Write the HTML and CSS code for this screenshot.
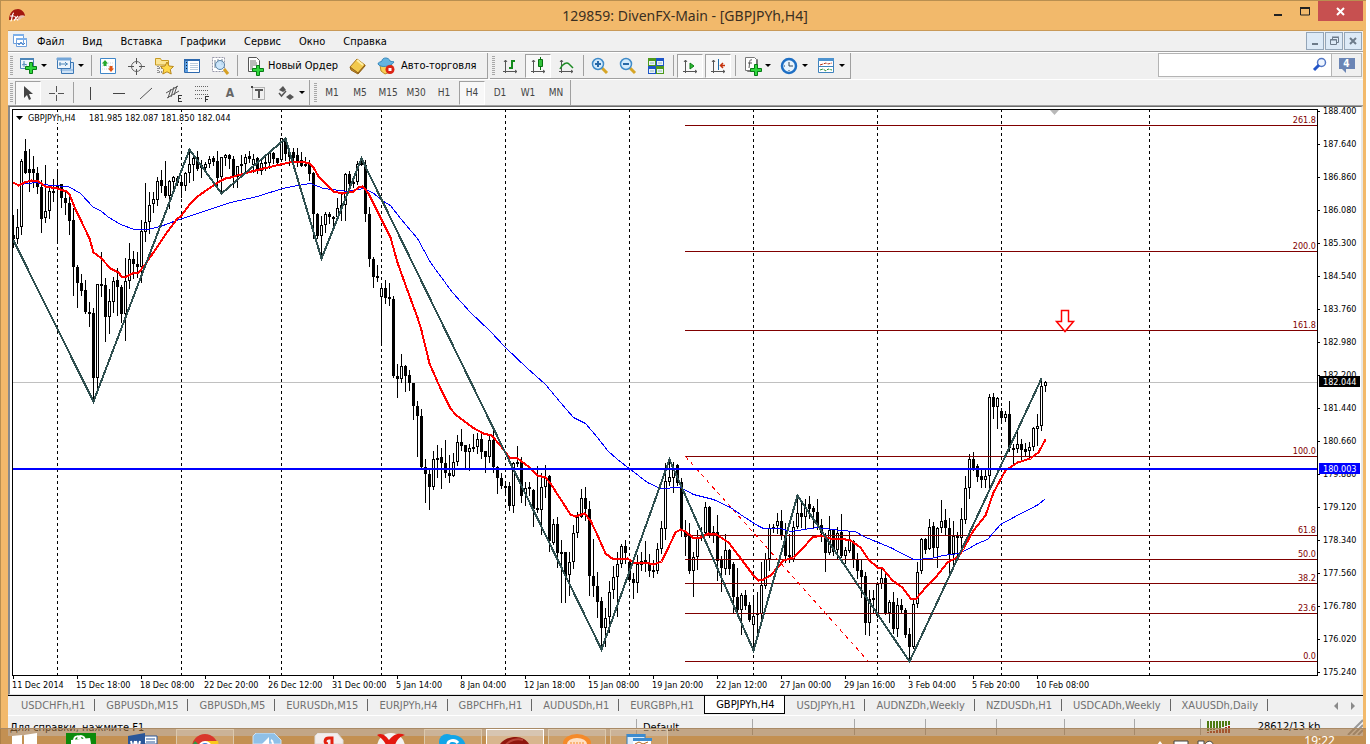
FILE: index.html
```
<!DOCTYPE html>
<html lang="ru">
<head>
    <meta charset="UTF-8">
    <meta name="viewport" content="width=device-width, initial-scale=1.0">
    <title>129859: DivenFX-Main - [GBPJPYh,H4]</title>
    <link rel="stylesheet" href="styles.css">
</head>
<body>
    <div class="window">
        <header class="titlebar">
            <svg class="logo" width="18" height="16" viewBox="0 0 18 16"><path d="M1 12C1 4 6 1 10 1c4 0 7 4 7 7-3-1-5 0-7 3z" fill="#a3180f"/><path d="M9 12c1-4 4-6 8-4-1 2-4 1-5 4z" fill="#e8c0b0"/><path d="M2.500 13c2 0 1-8 3.500-8M2 8h4M6.500 8l3.500 4.500M10 8l-4 4.500" stroke="#fff" stroke-width="1.2" fill="none"/></svg>
            <h1 class="caption">129859: DivenFX-Main - [GBPJPYh,H4]</h1>
            <div class="winbtns">
                <button class="wb" aria-label="Свернуть"><svg width="26" height="20"><path d="M10 13h8v2h-8z" fill="#222"/></svg></button>
                <button class="wb" aria-label="Развернуть"><svg width="26" height="20"><path d="M9.500 7h9v7h-9z" fill="none" stroke="#222"/><path d="M9 6h10v2H9z" fill="#222"/></svg></button>
                <button class="wb close" aria-label="Закрыть"><svg width="45" height="20"><path d="M19 7l7 7M26 7l-7 7" stroke="#fff" stroke-width="2"/></svg></button>
            </div>
        </header>
        <div class="client">
            <nav class="menubar">
                <svg class="mdi" width="16" height="16" viewBox="0 0 16 16"><path d="M1.500 1.500h10v9h-10zM4.500 5.500h10v8h-10z" fill="#fff" stroke="#6fa0dc"/><path d="M1 1h11v2H1zM4 5h11v2H4z" fill="#7db0ea"/><path d="M6 10l1 2 2-3 2 3 2-2" fill="none" stroke="#4a84cc"/></svg>
                <button>Файл</button><button>Вид</button><button>Вставка</button><button>Графики</button><button>Сервис</button><button>Окно</button><button>Справка</button>
                <div class="mdibtns">
                    <button aria-label="Свернуть окно"><svg width="16" height="16"><path d="M5 10h6v2H5z" fill="#6d7b8a"/></svg></button>
                    <button aria-label="Восстановить окно"><svg width="16" height="16"><path d="M6.500 6V4.500h6v5H11M4.500 6.500h6v5h-6zM4 7h7M6 4h7" fill="none" stroke="#6d7b8a"/></svg></button>
                    <button aria-label="Закрыть окно"><svg width="16" height="16"><path d="M5 5l6 6M11 5l-6 6" stroke="#6d7b8a" stroke-width="2"/></svg></button>
                </div>
            </nav>
            <div class="toolrow">
                <div class="toolbar">
                    <i class="grip"></i>
                    <button class="drop" aria-label="Новый график"><svg width="20" height="20" viewBox="0 0 20 20"><path d="M1.500 2.500h13v10h-13z" fill="#eef5fc" stroke="#4d86b8"/><path d="M1 2h14v2H1z" fill="#4d86b8"/><path d="M5 5v6M3 9l2-1 3 1" stroke="#4d86b8" fill="none"/><path d="M10.500 6.500h3v4h4v3h-4v4h-3v-4h-4v-3h4z" fill="#2fd63c" stroke="#087a16"/></svg></button>
                    <button class="drop" aria-label="Профили"><svg width="20" height="20" viewBox="0 0 20 20"><path d="M5.500 6.500h12v11h-12z" fill="#cfe3f7" stroke="#3d78b4"/><path d="M1.500 2.500h13v10h-13z" fill="#eef5fc" stroke="#3d78b4"/><path d="M1 2h14v2H1zM4 14h13" fill="#74a6d8" stroke="#74a6d8"/><path d="M4 6v4M3 8h9M9 6l2 2-2 2" stroke="#4d86b8" fill="none"/></svg></button>
                    <i class="sep"></i>
                    <button aria-label="Обзор рынка"><svg width="18" height="18" viewBox="0 0 18 18"><path d="M1.500 1.500h15v15h-15z" fill="#fff" stroke="#3f86c8"/><path d="M3 6h12M3 9h12M3 12h12" stroke="#cfd8e2" stroke-dasharray="1 1"/><path d="M6 3l3 3.500H7.500V9h-3V6.500H3z" fill="#27a92d"/><path d="M12 15l3-3.500h-1.500V9h-3v2.500H9z" fill="#e05618"/></svg></button>
                    <button aria-label="Окно данных"><svg width="18" height="18" viewBox="0 0 18 18"><circle cx="9.500" cy="9.500" r="5" fill="none" stroke="#666"/><path d="M9.500 1v6M9.500 12v6M1 9.500h6M12 9.500h6" stroke="#555"/></svg></button>
                    <button aria-label="Навигатор"><svg width="20" height="20" viewBox="0 0 20 20"><path d="M1.500 9V2.500h5l1 2h7V9z" fill="#fbe596" stroke="#c79a22"/><path d="M4 10v8M5 12h3M5 16h3" stroke="#333" stroke-dasharray="1 1"/><path d="M13 6l2 4 4.500.500-3.200 3 .900 4.500-4.200-2.200L8.800 18l.900-4.500-3.200-3 4.500-.500z" fill="#ffd84a" stroke="#b8871b"/></svg></button>
                    <button aria-label="Терминал"><svg width="18" height="18" viewBox="0 0 18 18"><path d="M1.500 2.500h15v13h-15z" fill="#fff" stroke="#2d68ad"/><path d="M1 2h16v2H1z" fill="#2d68ad"/><path d="M2 4h3v11H2z" fill="#5f9fe0"/><path d="M3.500 5v9" stroke="#123" stroke-dasharray="1 2"/><path d="M7 6.500h8M7 8.500h8M7 10.500h8M7 12.500h8" stroke="#bcd"/></svg></button>
                    <button aria-label="Тестер стратегий"><svg width="20" height="20" viewBox="0 0 20 20"><path d="M2.500 1.500h12v14h-12z" fill="#fff" stroke="#99a" stroke-dasharray="2 1"/><path d="M5 4v8M8 3v4M12 3v6" stroke="#789"/><circle cx="10" cy="9" r="4.500" fill="#bfe0fa" fill-opacity=".8" stroke="#5b83a5"/><path d="M14 13l4 5" stroke="#d6a024" stroke-width="3"/></svg></button>
                    <i class="sep"></i>
                    <button class="text"><svg width="20" height="20" viewBox="0 0 20 20"><path d="M3.500 1.500h8l3 3v11h-11z" fill="#fff" stroke="#555"/><path d="M5 5h6M5 7h7M5 9h7M5 11h3M5 13h3" stroke="#777"/><path d="M11.500 9.500h3v3h4v3h-4v4h-3v-4h-4v-3h4z" fill="#2fd63c" stroke="#087a16"/></svg>Новый Ордер</button>
                    <button aria-label="MetaEditor"><svg width="20" height="20" viewBox="0 0 20 20"><path d="M3 11l7-8 8 6-7 8z" fill="#f2c94c" stroke="#a9761b"/><path d="M3 11l1 3 7 4 7-8v-1l-7 8z" fill="#c98f24" stroke="#94651a"/><path d="M10 4l6 5" stroke="#fff0a8" stroke-width="2"/></svg></button>
                    <button class="text auto"><svg width="20" height="20" viewBox="0 0 20 20"><path d="M4 9h12l-2 7-5 2-4-3z" fill="#f7cf55" stroke="#bb8a22"/><path d="M2 8c0-2 3-2 4-3 0-4 7-4 8 0 1 1 4 0 4 1-3 5-14 6-16 2z" fill="#64b3e0" stroke="#3687bc"/><circle cx="14" cy="13.500" r="4.500" fill="#dc2415"/><path d="M12.500 12h3v3h-3z" fill="#fff"/></svg>Авто-торговля</button>
                </div>
                <div class="toolbar">
                    <i class="grip"></i>
                    <button aria-label="Бары"><svg width="18" height="18" viewBox="0 0 18 18"><path class="ax" d="M4.500 3v13M2 14.500h14M3 5l1.500-2L6 5M14 13l2 1.500-2 1.500"/><path d="M11 3v9M8 11h3M11 4h3" stroke="#138a1b" stroke-width="2"/></svg></button>
                    <button class="on" aria-label="Свечи"><svg width="18" height="18" viewBox="0 0 18 18"><path class="ax" d="M4.500 3v13M2 14.500h14M3 5l1.500-2L6 5M14 13l2 1.500-2 1.500"/><path d="M11.500 0v13" stroke="#087010"/><path d="M9.500 2.500h4v7h-4z" fill="#32c23a" stroke="#087010"/></svg></button>
                    <button aria-label="Линия"><svg width="18" height="18" viewBox="0 0 18 18"><path class="ax" d="M4.500 3v13M2 14.500h14M3 5l1.500-2L6 5M14 13l2 1.500-2 1.500"/><path d="M3 12c3-6 7-7 9-5l4 4" fill="none" stroke="#1d8b25" stroke-width="1.500"/></svg></button>
                    <i class="sep"></i>
                    <button aria-label="Увеличить"><svg width="20" height="20" viewBox="0 0 20 20"><path d="M12 12l5 5" stroke="#d6a526" stroke-width="3"/><circle cx="8" cy="8" r="5.500" fill="#d4ebfc" stroke="#3f8bc9" stroke-width="1.500"/><path d="M5 8h6M8 5v6" stroke="#2869a8" stroke-width="2"/></svg></button>
                    <button aria-label="Уменьшить"><svg width="20" height="20" viewBox="0 0 20 20"><path d="M12 12l5 5" stroke="#d6a526" stroke-width="3"/><circle cx="8" cy="8" r="5.500" fill="#d4ebfc" stroke="#3f8bc9" stroke-width="1.500"/><path d="M5 8h6" stroke="#2869a8" stroke-width="2"/></svg></button>
                    <button aria-label="Мозаика"><svg width="18" height="18" viewBox="0 0 18 18"><path d="M1 1h8v8H1zM9 9h8v8H9z" fill="#4d9a1b"/><path d="M9 1h8v8H9zM1 9h8v8H1z" fill="#1d55c8"/><path d="M2 4h6v4H2zM10 4h6v4h-6zM2 12h6v4H2zM10 12h6v4h-6z" fill="#eaf3f7"/><path d="M3 6h4M11 6h4M3 14h4M11 14h4" stroke="#9bb"/></svg></button>
                    <i class="sep"></i>
                    <button class="on" aria-label="Автопрокрутка"><svg width="18" height="18" viewBox="0 0 18 18"><path class="ax" d="M4.500 3v13M2 14.500h14M3 5l1.500-2L6 5M14 13l2 1.500-2 1.500"/><path d="M9 6l4 3-4 3z" fill="#2bbd34" stroke="#0c7d15"/></svg></button>
                    <button class="on" aria-label="Сдвиг графика"><svg width="18" height="18" viewBox="0 0 18 18"><path class="ax" d="M4.500 3v13M2 14.500h14M3 5l1.500-2L6 5M14 13l2 1.500-2 1.500"/><path d="M9.500 2v11" stroke="#1c6aa8"/><path d="M16 8.500h-5M14 6l-2.500 2.500L14 11" fill="none" stroke="#c6330d" stroke-width="1.500"/></svg></button>
                    <i class="sep"></i>
                    <button class="drop" aria-label="Индикаторы"><svg width="20" height="20" viewBox="0 0 20 20"><path d="M4.500 3.500h10v12h-10z" fill="#fff" stroke="#777"/><path d="M2.500 1.500h9l2 2v11h-11z" fill="#fff" stroke="#777"/><path d="M9 4c-3-1-2 2-3 8M5 7h4" fill="none" stroke="#555"/><path d="M11.500 8.500h3v4h4v3h-4v4h-3v-4h-4v-3h4z" fill="#2fd63c" stroke="#087a16"/></svg></button>
                    <button class="drop" aria-label="Периоды"><svg width="18" height="18" viewBox="0 0 18 18"><circle cx="9" cy="9" r="7" fill="#e9f5ff" stroke="#1e6fc4" stroke-width="2.500"/><path d="M9 5v4h4M9 13v1M4 9h1" fill="none" stroke="#345"/></svg></button>
                    <button class="drop" aria-label="Шаблоны"><svg width="18" height="18" viewBox="0 0 18 18"><path d="M1.500 1.500h15v14h-15z" fill="#fff" stroke="#3f83bd"/><path d="M1 1h16v3H1z" fill="#4d93cf"/><path d="M2 9.500h14" stroke="#3f83bd"/><path d="M3 8l3-1 3-1 2 1 4-1" fill="none" stroke="#b43218" stroke-dasharray="3 1"/><path d="M3 13l3-1 3 2 2-2 4 1" fill="none" stroke="#278e35" stroke-dasharray="3 1"/></svg></button>
                </div>
                <form class="search">
                    <input type="text" aria-label="Поиск">
                    <button type="button" class="find" aria-label="Найти"><svg width="16" height="16" viewBox="0 0 16 16"><circle cx="9.500" cy="5.500" r="4" fill="#eef5ff" stroke="#5276c4" stroke-width="1.500"/><path d="M7 8l-5 5" stroke="#2455c8" stroke-width="3"/></svg></button>
                    <button type="button" class="news" aria-label="Сообщения"><svg width="18" height="18" viewBox="0 0 18 18"><path d="M1 2h16v11H8v4l-4-4H1z" fill="#6b85b5"/></svg><b>4</b></button>
                </form>
            </div>
            <div class="toolrow second">
                <div class="toolbar">
                    <i class="grip"></i>
                    <button class="on" aria-label="Курсор"><svg width="18" height="18" viewBox="0 0 18 18"><path d="M5 2v12l3-3 2 5 2-1-2-5h4z" fill="#444"/></svg></button>
                    <button aria-label="Перекрестие"><svg width="18" height="18" viewBox="0 0 18 18"><path d="M9.500 2v6M9.500 11v6M2 9.500h6M11 9.500h6" stroke="#555"/></svg></button>
                    <i class="sep"></i>
                    <button aria-label="Вертикальная линия"><svg width="18" height="18" viewBox="0 0 18 18"><path d="M9.500 3v13" stroke="#444"/></svg></button>
                    <button aria-label="Горизонтальная линия"><svg width="18" height="18" viewBox="0 0 18 18"><path d="M4 9.500h12" stroke="#444"/></svg></button>
                    <button aria-label="Трендовая линия"><svg width="18" height="18" viewBox="0 0 18 18"><path d="M3 15L15 4" stroke="#555"/></svg></button>
                    <button aria-label="Канал"><svg width="18" height="18" viewBox="0 0 18 18"><path d="M1 9l12-7M2 14l12-7M3 14l3-9M6 13l3-10M9 11l3-9" stroke="#555"/><path d="M13 17.500h4M13 14.500h3M13 11.500h4M13.500 11v7" stroke="#333"/></svg></button>
                    <button aria-label="Фибоначчи"><svg width="18" height="18" viewBox="0 0 18 18"><path d="M2 2.500h14M2 6.500h14M2 10.500h14M2 14.500h8" stroke="#666" stroke-dasharray="1 1"/><path d="M12 12.500h4M12 15.500h3M12.500 12v6" stroke="#333"/></svg></button>
                    <button class="letter">A</button>
                    <button aria-label="Текстовая метка"><svg width="18" height="18" viewBox="0 0 18 18"><path d="M3.500 3.500h12v12h-12z" fill="none" stroke="#777" stroke-dasharray="1 1"/><path d="M6 6h8M10 6v8" stroke="#555" stroke-width="2"/><path d="M2 2h2v2H2z" fill="#444"/></svg></button>
                    <button class="drop wide" aria-label="Стрелки"><svg width="18" height="18" viewBox="0 0 18 18"><path d="M2 6l4-4 3 4-3 2zM9 13l4-3 4 3-4 3z" fill="#555"/><path d="M2 9l2.500 3L9 7" fill="none" stroke="#555" stroke-width="1.500"/></svg></button>
                </div>
                <div class="toolbar periods">
                    <i class="grip"></i>
                    <button>M1</button><button>M5</button><button>M15</button><button>M30</button><button>H1</button><button class="on">H4</button><button>D1</button><button>W1</button><button>MN</button>
                </div>
            </div>
            <main class="chart">
                <svg id="chart" viewBox="10 107 1350 587" preserveAspectRatio="xMinYMin meet" role="img" aria-label="GBPJPYh,H4"></svg>
            </main>
            <nav class="tabs">
                <a href="#">USDCHFh,H1</a><a href="#">GBPUSDh,M15</a><a href="#">GBPUSDh,M5</a><a href="#">EURUSDh,M15</a><a href="#">EURJPYh,H4</a><a href="#">GBPCHFh,H1</a><a href="#">AUDUSDh,H1</a><a href="#" class="last">EURGBPh,H1</a><a href="#" class="active">GBPJPYh,H4</a><a href="#">USDJPYh,H1</a><a href="#">AUDNZDh,Weekly</a><a href="#">NZDUSDh,H1</a><a href="#">USDCADh,Weekly</a><a href="#">XAUUSDh,Daily</a>
                <span class="scroll">
                    <button aria-label="Назад"><svg width="8" height="8"><path d="M6 0v8L2 4z" fill="#8a8a8a"/></svg></button>
                    <button aria-label="Вперёд"><svg width="8" height="8"><path d="M2 0v8l4-4z" fill="#8a8a8a"/></svg></button>
                </span>
            </nav>
            <footer class="status">
                <span class="help">Для справки, нажмите F1</span>
                <span class="cell w116">Default</span><span class="cell w102"></span><span class="cell w71"></span><span class="cell w71"></span><span class="cell w68"></span><span class="cell w70"></span><span class="cell w66"></span>
                <span class="cell net">
                    <svg width="24" height="12"><path d="M0 0h2v10H0zM3 0h2v9H3zM6 0h2v9H6zM9 0h2v8H9zM12 0h2v7h-2zM15 0h2v6h-2zM18 0h2v5h-2zM21 0h2v4h-2z" fill="#4f7a12"/><path d="M0 11h2v1H0zM3 10h2v2H3zM6 10h2v2H6zM9 9h2v3H9zM12 8h2v4h-2zM15 7h2v5h-2zM18 6h2v6h-2zM21 5h2v7h-2z" fill="#a52a14"/></svg>
                    <span>28612/13 kb</span>
                    <svg class="size" width="16" height="16"><path d="M1 16L16 1M6 16L16 6M11 16l5-5" stroke="#999" stroke-width="2"/></svg>
                </span>
            </footer>
        </div>
    </div>
    <div class="taskbar">
        <button class="task" aria-label="Пуск"><svg width="30" height="11"><path d="M2 3l10-1v9H2zM14 2l13-2v11H14z" fill="#fff"/></svg></button>
        <button class="task" aria-label="Магазин"><svg width="30" height="11"><path d="M0 0h30v11H0z" fill="#0c8a0c"/><path d="M5 7l19-2 1 6H5z" fill="#fff"/><path d="M8 8c0-6 6-6 7-1M12 6c1-4 6-4 7 1" fill="none" stroke="#fff" stroke-width="2"/></svg></button>
        <button class="task" aria-label="Word"><svg width="30" height="11"><path d="M16 3h13v8H16z" fill="#fff" stroke="#2a5699"/><path d="M18 6h9M18 9h9" stroke="#2a5699"/><path d="M0 3l17-3v11H0z" fill="#2a5699"/><path d="M3 8l1 4M7 8l-1 4M8 8l1 4M12 8l-1 4" stroke="#fff" stroke-width="2"/></svg></button>
        <button class="task run" aria-label="Chrome"><svg width="30" height="11"><circle cx="15" cy="13" r="13" fill="#d9362c"/><path d="M15 7h13c1 4 0 5 0 6H15z" fill="#fbc91c"/><path d="M2 11l3-4 6 6H2z" fill="#2b9a45"/><circle cx="15" cy="14" r="7" fill="#fff"/><circle cx="15" cy="14" r="5" fill="#3b7de0"/></svg></button>
        <button class="task" aria-label="Звук"><svg width="30" height="11"><path d="M1 3l3-3h18l7 7v4H1z" fill="#8fc0e8" stroke="#cfe3f4"/><path d="M10 11l7-7v7z" fill="#fff"/><path d="M19 7c2 1 2 3 2 5" stroke="#fff" stroke-width="2" fill="none"/></svg></button>
        <button class="task" aria-label="Яндекс"><svg width="30" height="11"><path d="M1 3l3-3h19l6 7v4H1z" fill="#f3eeee" stroke="#ddd"/><path d="M18 12V5h-3c-5 0-5 6-1 6" fill="none" stroke="#e3200f" stroke-width="3"/></svg></button>
        <button class="task" aria-label="Яндекс.Браузер"><svg width="30" height="11"><circle cx="15" cy="14" r="14" fill="#f4f4f4"/><path d="M1 2c5-3 9 1 12 5 4-5 9-8 16-5-6 2-8 5-10 10h-9C8 7 5 5 1 2z" fill="#e4180f"/></svg></button>
        <button class="task run" aria-label="Skype"><svg width="30" height="11"><circle cx="9" cy="8" r="8" fill="#12a5e8"/><circle cx="15" cy="14" r="13" fill="#12a5e8"/><path d="M20 9c-3-4-11-3-10 2" fill="none" stroke="#fff" stroke-width="3"/></svg></button>
        <button class="task run cur" aria-label="DivenFX"><svg width="34" height="9"><path d="M1 9C4 2 12 0 18 0c7 0 12 4 14 9z" fill="#8f160d"/><path d="M7 9c4-6 12-8 18-6" fill="none" stroke="#b94538" stroke-width="2"/></svg></button>
        <button class="task run" aria-label="Сообщения"><svg width="30" height="11"><ellipse cx="15" cy="9" rx="14" ry="9" fill="#f58a2a"/><ellipse cx="15" cy="10" rx="10" ry="6" fill="#ffe0c4"/><path d="M8 9h14" stroke="#f58a2a" stroke-dasharray="2 1"/></svg></button>
        <button class="task run" aria-label="Графики"><svg width="30" height="11"><path d="M3 0h18v11H3z" fill="#dcecf9" stroke="#2e78b8"/><path d="M3 0h18v3H3zM9 4h19v3H9z" fill="#3b8bd0"/><path d="M9 7h18v4H9z" fill="#fff"/><path d="M11 10l4-2 4 2 5-2" stroke="#b5651d" fill="none"/></svg></button>
        <div class="tray">
            <svg width="80" height="6"><path d="M1 5l3-4 3 4z" fill="#fff"/><path d="M18 1h14v6H18z" fill="#fff" stroke="#444"/><path d="M42 1h6v6h-6zM49 5c1-5 8-5 8 0v2h-8z" fill="#fff" stroke="#444"/><path d="M75 4h4v2h-4z" fill="#444"/></svg>
            <time class="clock">19:22</time>
        </div>
    </div>
    <script src="chart.js"></script>
</body>
</html>
```
FILE: styles.css
```
*{
    box-sizing: border-box;
    margin: 0;
    padding: 0;
}
html,
body{
    height: 100%;
    overflow: hidden;
    background: #fff;
}
body,
button,
input{
    font-family: "DejaVu Sans Condensed", "Open Sans", sans-serif;
    font-size: 11px;
    color: #000;
}
button{
    border: 0;
    background: none;
}
svg{
    display: block;
}
.window{
    display: flex;
    flex-direction: column;
    height: 100vh;
    margin-right: 4px;
    padding: 0 3px 8px 7px;
    background: #f2b96b;
    border-top: 1px solid #b98f50;
    border-left: 1px solid #b98f50;
}
.titlebar{
    display: flex;
    align-items: flex-start;
    height: 29px;
}
.logo{
    margin-top: 7px;
}
.caption{
    flex: 1;
    padding-left: 80px;
    font: 14px/29px "Noto Sans", sans-serif;
    color: #3a2f22;
    text-align: center;
}
.winbtns{
    display: flex;
}
.wb{
    width: 27px;
    height: 20px;
}
.close{
    width: 45px;
    background: #c75050;
}
.client{
    flex: 1;
    display: flex;
    flex-direction: column;
    min-height: 0;
    background: #f0f0f0;
    border-top: 1px solid #c99a58;
}
.menubar{
    display: flex;
    align-items: center;
    height: 21px;
    padding-left: 4px;
    border-bottom: 1px solid #a0a0a0;
}
.menubar > button{
    padding: 0 9px;
    height: 20px;
}
.mdibtns{
    display: flex;
    gap: 1px;
    margin-left: auto;
    padding-right: 1px;
}
.mdibtns button{
    width: 18px;
    height: 18px;
    border: 1px solid #93a5b8;
    background: #ddeaf7;
}
.toolrow{
    display: flex;
    height: 27px;
    border-top: 1px solid #fff;
}
.second{
    border-bottom: 1px solid #a0a0a0;
}
.toolbar{
    display: flex;
    align-items: center;
    padding: 0 6px 0 2px;
    border-right: 1px solid #a0a0a0;
    border-bottom: 1px solid #a0a0a0;
    margin-right: 2px;
}
.toolbar + .toolbar{
    padding-right: 1px;
}
.second .toolbar{
    padding-right: 0;
    border-bottom: 0;
}
.grip{
    width: 3px;
    height: 19px;
    margin-right: 1px;
    background: repeating-linear-gradient(#a8a8a8 0 1px, #f0f0f0 1px 2px);
}
.toolbar button{
    display: flex;
    align-items: center;
    justify-content: center;
    width: 28px;
    height: 24px;
    border: 1px solid transparent;
}
.toolbar .on{
    background: #f8f8f8;
    border-color: #a0a0a0 #fff #fff #a0a0a0;
    margin: 0 1px;
    width: 26px;
}
.toolbar .drop{
    width: 37px;
    justify-content: flex-start;
    padding-left: 4px;
}
.drop::after{
    content: "";
    margin-left: auto;
    margin-right: 3px;
    border: 3px solid transparent;
    border-top-color: #000;
    border-bottom: 0;
}
.toolbar .text{
    width: auto;
    padding: 0 4px;
    gap: 3px;
}
.toolbar .auto{
    gap: 5px;
}
.sep{
    width: 1px;
    height: 21px;
    margin: 0 2px 0 3px;
    background: #a0a0a0;
}
.ax{
    fill: none;
    stroke: #555;
}
.toolbar .letter{
    font-weight: bold;
    font-size: 12px;
    color: #666;
}
.periods button{
    font-size: 10px;
    color: #444;
}
.search{
    display: flex;
    height: 24px;
    margin-left: auto;
    margin-right: 1px;
    border: 1px solid #b4b4b4;
}
.search input{
    width: 150px;
    border: 0;
    outline: 0;
    background: #fff;
}
.find{
    width: 22px;
    padding-left: 3px;
    background: #fff;
}
.news{
    display: grid;
    place-items: center;
    width: 30px;
    border-left: 1px solid #b4b4b4;
}
.news svg,
.news b{
    grid-area: 1 / 1;
}
.news b{
    padding-bottom: 3px;
    font-size: 10px;
    color: #fff;
}
.chart{
    flex: 1;
    min-height: 0;
    padding: 0 1px 0 0;
    background: #fff;
    border-top: 1px solid #696969;
    border-left: 2px solid #8a8a8a;
    border-right: 2px solid #e8e8e8;
    border-bottom: 1px solid #e3e3e3;
}
#chart{
    width: 100%;
    height: 100%;
}
#chart text{
    font-family: "DejaVu Sans Condensed", sans-serif;
    font-size: 9px;
}
.tabs{
    display: flex;
    height: 21px;
    padding-left: 2px;
    border-top: 1px solid #000;
    border-bottom: 1px solid #fff;
}
.tabs a{
    display: flex;
    align-items: center;
    height: 18px;
    padding: 0 10px 0 11px;
    font-size: 11px;
    color: #707070;
    text-decoration: none;
    background: linear-gradient(#666, #666) right 3px / 1px 12px no-repeat;
}
.tabs .last{
    background: none;
}
.tabs .active{
    color: #000;
    background: #fff;
    border: 1px solid #000;
    border-top: 0;
}
.scroll{
    display: flex;
    align-items: center;
    gap: 9px;
    margin-left: auto;
    padding-right: 6px;
}
.status{
    display: flex;
    height: 20px;
    line-height: 22px;
    padding-top: 1px;
}
.help{
    flex: 1;
    padding-left: 2px;
}
.cell{
    padding-left: 6px;
    margin-top: 2px;
    height: 16px;
    line-height: 18px;
    border-left: 1px solid #a8a8a8;
}
.w116{
    width: 116px;
}
.w102{
    width: 102px;
}
.w71{
    width: 71px;
}
.w68{
    width: 68px;
}
.w70{
    width: 70px;
}
.w66{
    width: 66px;
}
.net{
    display: flex;
    align-items: center;
    justify-content: space-between;
    width: 163px;
}
/* the desktop task bar covers the bottom of the window */
.taskbar{
    position: absolute;
    left: 0;
    right: 4px;
    bottom: 0;
    display: flex;
    gap: 4px;
    height: 16px;
    overflow: hidden;
    background: rgba(163, 117, 65, .6);
    border-top: 1px solid #a98a66;
}
.task{
    display: flex;
    justify-content: center;
    width: 58px;
    height: 20px;
    padding-top: 4px;
}
.task:first-child{
    width: 48px;
    justify-content: flex-end;
    padding-right: 8px;
}
.run{
    border: 1px solid #dcc9ae;
    background: rgba(255, 255, 255, .15);
}
.cur{
    background: rgba(255, 255, 255, .35);
    border-color: #fff;
    padding-top: 7px;
}
.tray{
    display: flex;
    gap: 68px;
    margin-left: auto;
    padding: 6px 31px 0 0;
    color: #fff;
}
.tray svg{
    margin-top: 5px;
}
.clock{
    font: 12px/12px "Noto Sans", sans-serif;
}
```
FILE: chart.js
```
var svg = document.getElementById('chart');
var NS = 'http://www.w3.org/2000/svg';
var RIGHT = 1317, TOP = 109, BOTTOM = 675;

function add(name, attrs, text) {
    var el = document.createElementNS(NS, name);
    for (var k in attrs) el.setAttribute(k, attrs[k]);
    if (text) el.textContent = text;
    svg.appendChild(el);
    return el;
}
function hline(x1, x2, y, color, w) {
    add('rect', {x: x1, y: y, width: x2 - x1, height: w || 1, fill: color});
}
function poly(str, color, w) {
    add('polyline', {points: str, fill: 'none', stroke: color, 'stroke-width': w, 'shape-rendering': 'crispEdges', transform: 'translate(0.5 0.5)'});
}

// high, body top, body bottom, low, 1 = falling
var bars = [
[215,235,239,247,1],[209,227,239,243,0],[159,161,227,234,0],[139,151,173,173,1],[149,169,173,191,1],[156,169,173,187,1],[167,173,187,193,1],[180,187,219,232,1],
[165,211,218,222,0],[185,191,211,218,0],[179,191,193,201,1],[169,185,189,241,1],[184,184,198,207,1],[192,198,203,214,1],[197,203,221,234,1],[208,220,267,295,1],
[265,267,283,307,1],[274,283,291,295,1],[280,290,312,313,1],[302,312,314,326,1],[308,313,378,400,1],[284,284,378,387,0],[252,284,286,296,1],[278,285,317,341,1],
[289,301,317,333,0],[277,281,302,312,0],[268,280,287,315,1],[285,287,314,322,1],[258,281,314,340,0],[243,259,281,288,0],[251,259,264,278,1],[252,264,267,277,1],
[220,231,267,282,0],[183,222,232,241,0],[192,205,222,233,0],[192,199,204,212,0],[177,181,200,205,0],[170,180,186,192,1],[161,186,196,197,1],[180,181,196,208,0],
[176,177,182,192,0],[176,178,183,185,1],[178,182,186,197,1],[172,173,186,190,0],[150,164,173,182,0],[156,158,165,180,0],[151,157,169,170,1],[160,165,168,177,1],
[162,164,168,172,0],[156,159,164,167,0],[156,158,162,165,1],[151,161,178,185,1],[157,157,177,192,0],[154,155,158,165,0],[154,155,159,168,1],[156,159,177,187,1],
[166,166,177,187,0],[155,164,166,173,0],[154,157,164,172,0],[151,156,159,162,1],[154,159,165,172,0],[157,158,171,173,1],[160,163,171,174,0],[157,162,164,170,0],
[152,153,163,168,0],[152,153,159,163,1],[158,158,163,164,1],[138,138,160,161,0],[137,138,154,160,1],[151,152,157,165,1],[148,152,158,165,1],[148,155,162,166,1],
[152,160,166,166,1],[157,164,166,166,1],[160,163,174,180,1],[172,173,214,238,1],[213,214,236,238,1],[216,225,236,258,0],[212,214,225,232,0],[212,214,217,223,1],
[216,217,219,228,1],[198,208,217,220,0],[193,205,209,220,0],[173,174,205,220,0],[171,174,184,187,1],[181,182,184,187,1],[161,164,182,184,0],[157,163,165,165,1],
[160,165,214,221,1],[207,214,259,266,1],[257,259,277,287,1],[265,276,278,281,1],[283,288,297,345,0],[280,288,298,303,1],[283,297,299,305,1],[296,299,376,377,1],
[364,376,379,397,1],[354,366,379,382,0],[365,366,376,391,1],[370,375,383,390,1],[383,383,406,419,1],[401,406,416,456,1],[409,416,467,467,1],[459,467,474,502,1],
[468,474,487,509,1],[451,459,487,489,0],[445,458,460,477,1],[448,457,463,488,1],[440,463,473,477,1],[455,473,476,482,1],[453,462,476,476,0],[435,442,462,465,0],
[429,442,446,450,1],[445,445,452,468,1],[444,448,452,470,0],[434,447,449,451,1],[433,439,447,453,0],[433,439,452,458,1],[451,451,457,472,1],[436,440,457,462,0],
[429,440,467,472,1],[466,467,478,493,1],[473,478,486,488,1],[482,486,488,493,0],[482,486,506,510,1],[462,463,506,512,0],[446,462,464,466,1],[457,462,496,502,1],
[482,488,494,505,0],[482,487,489,495,1],[489,490,509,526,1],[466,508,510,512,0],[473,487,510,534,0],[465,478,487,497,0],[475,476,541,551,1],[519,524,543,544,0],
[517,524,553,567,1],[540,552,554,602,1],[552,552,576,602,1],[552,562,575,595,0],[525,533,562,568,0],[512,517,533,537,0],[489,498,517,517,0],[487,498,509,520,1],
[501,509,576,595,1],[539,576,586,596,1],[572,586,602,617,1],[597,601,628,648,1],[608,618,628,646,0],[581,592,617,632,0],[566,577,590,598,0],[552,564,577,616,0],
[544,546,564,567,0],[540,546,553,563,1],[559,562,580,581,1],[573,579,583,598,1],[555,564,583,592,0],[552,561,565,570,1],[541,560,564,571,1],[554,564,571,576,1],
[560,570,572,577,1],[543,549,571,573,0],[521,528,549,553,0],[463,481,529,539,0],[460,477,482,485,0],[462,468,478,492,0],[464,465,483,485,1],[478,482,531,536,1],
[520,531,537,555,1],[523,536,571,573,1],[552,557,571,596,0],[530,538,557,569,0],[527,536,538,540,1],[502,507,533,534,0],[506,507,533,537,1],[526,532,534,542,1],
[515,532,561,580,1],[556,559,568,591,1],[534,550,569,574,0],[549,550,569,574,1],[562,564,597,613,1],[568,597,610,614,1],[593,595,610,634,0],[590,595,606,609,1],
[602,605,620,621,1],[595,616,625,647,0],[592,613,615,632,1],[562,585,614,620,0],[553,559,586,588,0],[524,528,559,570,0],[524,527,529,532,1],[513,521,526,533,0],
[510,521,536,539,1],[523,536,556,562,1],[534,555,557,562,1],[521,527,559,561,0],[497,513,527,528,0],[501,513,517,527,1],[499,508,517,529,0],[496,504,509,518,1],
[506,508,512,527,1],[499,512,525,529,1],[519,525,533,541,1],[533,537,553,571,1],[516,530,553,554,0],[529,529,552,555,1],[527,533,550,558,0],[514,532,556,557,1],
[547,550,556,563,0],[532,540,551,552,0],[540,541,559,567,1],[553,559,571,578,1],[559,570,577,597,1],[572,576,623,634,1],[590,599,623,635,0],[590,598,600,613,1],
[582,584,616,617,0],[567,578,584,588,0],[573,578,613,614,1],[600,602,613,622,0],[592,602,629,633,1],[598,605,629,636,0],[599,605,610,612,1],[608,610,635,637,1],
[628,634,647,659,1],[599,604,647,648,0],[562,572,604,607,0],[538,539,571,573,0],[538,539,550,553,1],[519,527,549,549,0],[522,526,548,556,1],[527,528,548,567,0],
[500,521,528,532,0],[509,520,528,535,1],[518,528,554,573,1],[521,536,554,565,0],[532,536,538,555,1],[508,519,538,552,0],[476,488,520,523,0],[454,459,488,498,0],
[452,459,469,470,1],[464,466,477,481,1],[468,476,480,487,1],[470,476,480,487,0],[394,397,476,487,0],[393,397,407,418,1],[397,398,407,428,0],[408,411,418,423,1],
[411,414,418,421,0],[401,414,448,451,1],[444,448,450,465,1],[431,444,449,452,0],[439,444,450,460,1],[443,449,452,456,1],[442,447,451,458,0],[427,428,447,450,0],
[414,426,429,445,0],[380,386,426,430,0],[381,382,386,391,0]
];

var fast = '13,182 18,185 24,182 31,180 38,181 45,186 57,188 66,191 69,194 75,209 80,219 89,238 93,252 100,257 110,268 118,272 121,276 126,276 132,273 138,272 144,265 157,246 165,234 176,219 181,215 190,203 197,196 210,187 219,181 227,177 230,177 247,172 263,168 280,164 293,161 301,161 309,163 313,167 318,176 325,183 333,191 342,193 353,191 358,187 362,186 364,188 368,193 390,237 397,262 407,290 417,317 421,330 429,363 440,388 450,408 455,414 472,427 483,433 491,435 500,445 509,457 517,458 528,466 537,475 545,477 550,483 570,514 575,516 584,513 590,520 598,537 605,553 613,559 627,558 633,562 645,562 653,564 661,561 667,549 675,532 680,529 685,531 692,537 700,537 708,533 716,534 722,538 728,542 738,555 753,575 758,580 763,579 770,575 777,567 783,560 793,557 802,548 812,537 820,535 830,538 840,538 850,540 860,547 868,559 877,567 882,568 892,580 902,587 910,598 916,598 925,587 935,577 947,562 958,556 963,548 973,530 985,515 993,492 1005,470 1017,462 1030,458 1038,452 1045,439';
var slow = '13,183 20,184 35,182 50,185 68,186 80,193 93,207 100,210 107,216 120,224 134,229 147,229 160,226 176,220 200,212 230,202 257,196 282,188 297,185 310,183 323,188 347,191 363,188 372,192 383,201 390,205 400,218 417,238 430,262 452,292 470,312 489,330 505,347 527,368 545,384 560,402 573,417 585,423 597,437 607,450 617,459 630,469 647,482 660,488 680,487 693,494 713,499 730,507 743,516 757,525 763,528 780,528 790,531 817,527 840,530 855,531 863,536 890,547 913,559 930,558 943,555 958,553 965,550 977,543 987,539 1000,524 1013,517 1038,504 1045,498';
var zigzag = '13,240 93,401 189,149 221,193 285,138 321,258 361,158 601,649 669,459 753,650 797,495 909,661 1041,378';

// day separators
[57, 181, 281, 381, 505, 629, 753, 877, 1001, 1149].forEach(function (x) {
    add('path', {d: 'M' + (x + 0.5) + ' ' + TOP + 'V' + BOTTOM, stroke: '#000', 'stroke-dasharray': '3 3'});
});

// current price
hline(13, RIGHT, 382, '#c0c0c0');

// candles
bars.forEach(function (b, i) {
    var x = 13 + i * 4;
    add('rect', {x: x, y: b[0], width: 1, height: b[3] - b[0] + 1, fill: '#000'});
    add('rect', {x: x - 1, y: b[1], width: 3, height: Math.max(b[2] - b[1], 1), fill: '#000'});
    if (!b[4] && b[2] - b[1] > 2) {
        add('rect', {x: x, y: b[1] + 1, width: 1, height: b[2] - b[1] - 2, fill: '#fff'});
    }
});

// fibo levels
[['261.8', 125], ['200.0', 251], ['161.8', 330], ['100.0', 456], ['61.8', 535], ['50.0', 559], ['38.2', 583], ['23.6', 613], ['0.0', 661]].forEach(function (f) {
    hline(685, RIGHT, f[1], '#800000');
    add('text', {x: RIGHT - 1, y: f[1] - 2, 'text-anchor': 'end', fill: '#800000'}, f[0]);
});
add('path', {d: 'M685.500 456.500L868.500 661.500', stroke: '#f00', 'stroke-dasharray': '4 4', 'shape-rendering': 'crispEdges'});

poly(slow, '#00f', 1);
poly(fast, '#f00', 2);
poly(zigzag, '#2f4f4f', 2);
hline(13, RIGHT, 468, '#00f', 2);

// frame and price scale
add('rect', {x: 12.5, y: 109.5, width: 1305, height: 566, fill: 'none', stroke: '#000'});
['188.400', '187.640', '186.860', '186.080', '185.300', '184.540', '183.760', '182.980', '182.200', '181.440', '180.660', '179.880', '179.120', '178.340', '177.560', '176.780', '176.020', '175.240'].forEach(function (p, i) {
    hline(RIGHT, RIGHT + 3, 111 + i * 33, '#000');
    add('text', {x: 1323, y: 114 + i * 33}, p);
});
[['182.044', 376, '#000'], ['180.003', 463, '#00f']].forEach(function (m) {
    add('rect', {x: 1319, y: m[1], width: 41, height: 11, fill: m[2]});
    add('text', {x: 1323, y: m[1] + 9, fill: '#fff'}, m[0]);
});

// time scale
['11 Dec 2014', '15 Dec 18:00', '18 Dec 08:00', '22 Dec 20:00', '26 Dec 12:00', '31 Dec 00:00', '5 Jan 14:00', '8 Jan 04:00', '12 Jan 18:00', '15 Jan 08:00', '19 Jan 20:00', '22 Jan 12:00', '27 Jan 00:00', '29 Jan 16:00', '3 Feb 04:00', '5 Feb 20:00', '10 Feb 08:00'].forEach(function (t, i) {
    add('rect', {x: 13 + i * 64, y: BOTTOM, width: 1, height: 4, fill: '#000'});
    add('text', {x: 12 + i * 64, y: 688}, t);
});

// symbol and last bar
add('path', {d: 'M16 116h7l-3.500 4z', fill: '#000'});
add('rect', {x: 26, y: 112, width: 205, height: 11, fill: '#fff'});
add('text', {x: 28, y: 121}, 'GBPJPYh,H4');
add('text', {x: 89, y: 121}, '181.985 182.087 181.850 182.044');

// chart shift mark and sell arrow
add('path', {d: 'M1050 110h9l-4.500 5z', fill: '#b8b8b8'});
add('path', {d: 'M1061.500 310.500h7v11h5l-8.500 10-8.500-10h5z', fill: '#fff', stroke: '#f00', 'stroke-width': 1.5});
```
